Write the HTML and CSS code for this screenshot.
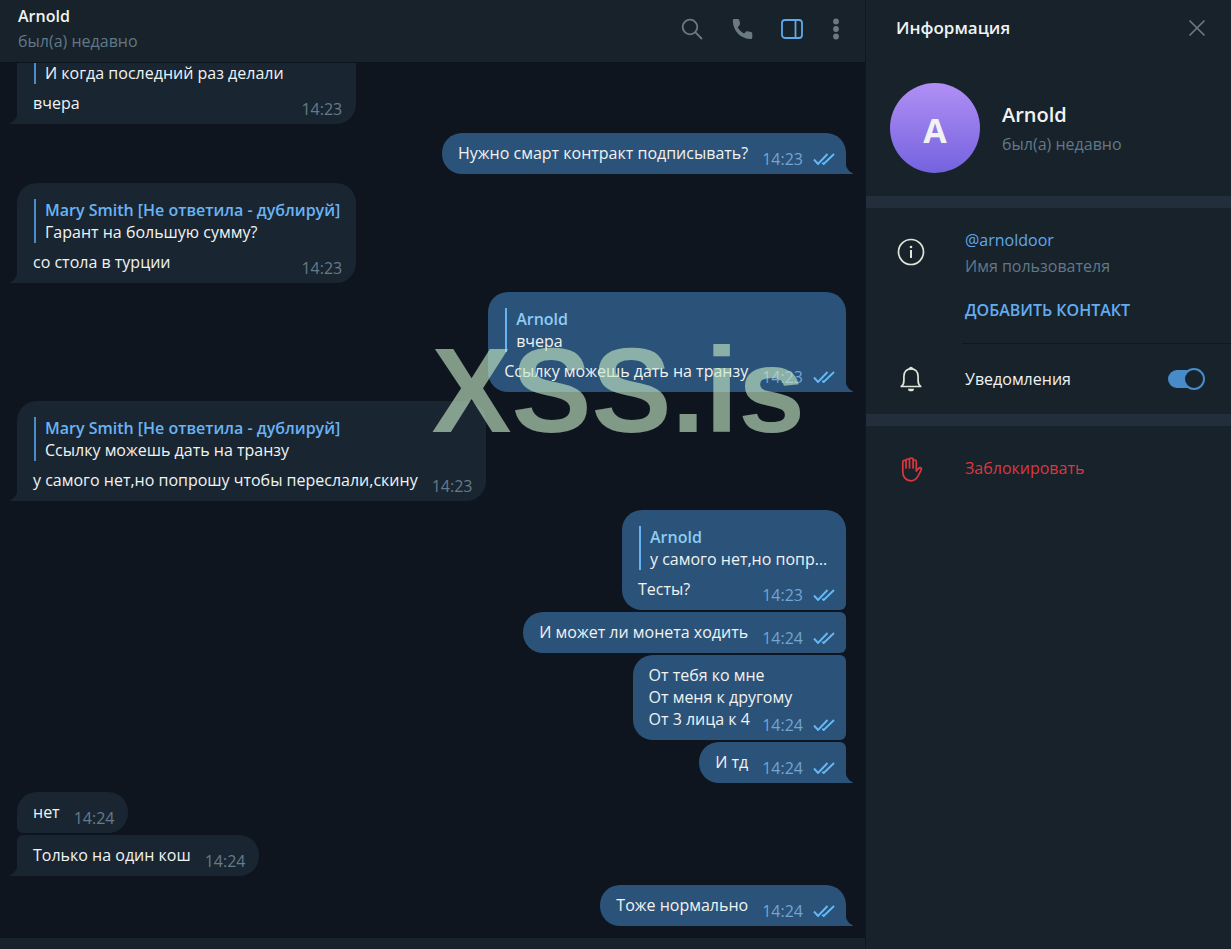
FILE: index.html
```
<!DOCTYPE html>
<html lang="ru">
<head>
  <meta charset="utf-8">
  <title>Arnold</title>
  <link rel="stylesheet" href="styles.css">
</head>
<body>
  <svg class="sprite" aria-hidden="true">
    <symbol id="checks" viewBox="0 0 22 12">
      <path d="M1 6.500 5 11 14.500 1M9.300 9.700 10.700 11 21 1" />
    </symbol>
  </svg>

  <main class="chat">
    <header class="chat-header">
      <div class="chat-title">
        <h1 class="name">Arnold</h1>
        <div class="status">был(а) недавно</div>
      </div>
      <div class="actions">
        <button class="icon-button" aria-label="Поиск">
          <svg width="24" height="24" viewBox="0 0 24 24" fill="none" stroke="currentColor" stroke-width="1.8"><circle cx="10" cy="10" r="7.3"/><path d="M15.2 15.2 22 22"/></svg>
        </button>
        <button class="icon-button" aria-label="Позвонить">
          <svg width="24" height="24" viewBox="0 0 24 24" fill="currentColor"><path d="M4.3 2h3.2c1.200 0 1.700.6 1.900 1.600l.6 3c.1.800-.1 1.400-.7 1.900L7.700 10.200c1.500 2.700 3.500 4.700 6.300 6.200l1.900-1.700c.6-.5 1.200-.6 1.900-.5l3 .7c1 .2 1.500.8 1.500 1.800v3.500c0 1-.6 1.800-1.600 1.800C11 22 2.800 14 2.800 3.500 2.800 2.600 3.400 2 4.300 2z"/></svg>
        </button>
        <button class="icon-button active" aria-label="Информация">
          <svg width="24" height="24" viewBox="0 0 24 24" fill="none" stroke="currentColor" stroke-width="1.8"><rect x="2" y="3" width="20" height="18" rx="3"/><path d="M15.500 3v18"/></svg>
        </button>
        <button class="icon-button narrow" aria-label="Меню">
          <svg width="12" height="24" viewBox="0 0 12 24" fill="currentColor"><circle cx="6" cy="4.500" r="2.900"/><circle cx="6" cy="12" r="2.900"/><circle cx="6" cy="19.500" r="2.900"/></svg>
        </button>
      </div>
    </header>

    <section class="messages">
      <article class="message in tail">
        <blockquote class="quote"><b>Mary Smith [Не ответила - дублируй]</b><span>И когда последний раз делали</span></blockquote>
        <div class="row"><p>вчера</p><span class="meta"><time>14:23</time></span></div>
      </article>
      <article class="message out tail">
        <div class="row"><p>Нужно смарт контракт подписывать?</p><span class="meta"><time>14:23</time><svg class="checks"><use href="#checks"/></svg></span></div>
      </article>
      <article class="message in tail">
        <blockquote class="quote"><b>Mary Smith [Не ответила - дублируй]</b><span>Гарант на большую сумму?</span></blockquote>
        <div class="row"><p>со стола в турции</p><span class="meta"><time>14:23</time></span></div>
      </article>
      <article class="message out tail">
        <blockquote class="quote"><b>Arnold</b><span>вчера</span></blockquote>
        <div class="row"><p>Ссылку можешь дать на транзу</p><span class="meta"><time>14:23</time><svg class="checks"><use href="#checks"/></svg></span></div>
      </article>
      <article class="message in tail">
        <blockquote class="quote"><b>Mary Smith [Не ответила - дублируй]</b><span>Ссылку можешь дать на транзу</span></blockquote>
        <div class="row"><p>у самого нет,но попрошу чтобы переслали,скину</p><span class="meta"><time>14:23</time></span></div>
      </article>
      <article class="message out">
        <blockquote class="quote short"><b>Arnold</b><span>у самого нет,но попрошу чтобы переслали,скину</span></blockquote>
        <div class="row"><p>Тесты?</p><span class="meta"><time>14:23</time><svg class="checks"><use href="#checks"/></svg></span></div>
      </article>
      <article class="message out joined">
        <div class="row"><p>И может ли монета ходить</p><span class="meta"><time>14:24</time><svg class="checks"><use href="#checks"/></svg></span></div>
      </article>
      <article class="message out joined">
        <div class="row"><p>От тебя ко мне<br>От меня к другому<br>От 3 лица к 4</p><span class="meta over"><time>14:24</time><svg class="checks"><use href="#checks"/></svg></span></div>
      </article>
      <article class="message out joined tail">
        <div class="row"><p>И тд</p><span class="meta"><time>14:24</time><svg class="checks"><use href="#checks"/></svg></span></div>
      </article>
      <article class="message in">
        <div class="row"><p>нет</p><span class="meta"><time>14:24</time></span></div>
      </article>
      <article class="message in joined tail">
        <div class="row"><p>Только на один кош</p><span class="meta"><time>14:24</time></span></div>
      </article>
      <article class="message out tail">
        <div class="row"><p>Тоже нормально</p><span class="meta"><time>14:24</time><svg class="checks"><use href="#checks"/></svg></span></div>
      </article>
    </section>

    <footer class="composer"></footer>
    <div class="watermark">XSS.is</div>
  </main>

  <aside class="info">
    <header class="info-header">
      <h2 class="info-title">Информация</h2>
      <button class="icon-button" aria-label="Закрыть">
        <svg width="24" height="24" viewBox="0 0 24 24" fill="none" stroke="currentColor" stroke-width="1.700"><path d="M4.500 4.500l15 15M19.500 4.500l-15 15"/></svg>
      </button>
    </header>
    <div class="profile">
      <div class="avatar">A</div>
      <div class="profile-text">
        <div class="profile-name">Arnold</div>
        <div class="status">был(а) недавно</div>
      </div>
    </div>

    <section class="block contact">
      <svg class="block-icon" width="28" height="28" viewBox="0 0 28 28" fill="none" stroke="currentColor" stroke-width="1.700"><circle cx="14" cy="14" r="12.500"/><path d="M14 12v8" stroke-width="2"/><circle cx="14" cy="9" r="1.300" fill="currentColor" stroke="none"/></svg>
      <div class="contact-text">
        <a class="username" href="#arnoldoor">@arnoldoor</a>
        <div class="status">Имя пользователя</div>
        <button class="add">ДОБАВИТЬ КОНТАКТ</button>
      </div>
    </section>
    <section class="notifications">
      <svg class="block-icon" width="28" height="28" viewBox="0 0 28 28" fill="none" stroke="currentColor" stroke-width="1.700" stroke-linejoin="round"><path d="M4.300 21.500c2-1.500 2.600-3.200 2.600-6v-4.300c0-4.300 2.800-7.400 7.100-7.400s7.100 3.100 7.100 7.400v4.300c0 2.800.6 4.500 2.600 6z"/><path d="M12.600 3.600a1.500 1.500 0 0 1 2.800 0z" fill="currentColor"/><path d="M11 23.700h6a3 2.600 0 0 1-6 0z" fill="currentColor" stroke="none"/></svg>
      <label class="notify-label" for="notify">Уведомления</label>
      <input class="toggle" id="notify" type="checkbox" checked>
    </section>

    <section class="block">
      <button class="ban">
        <svg class="block-icon" width="28" height="28" viewBox="0 0 28 28" fill="none" stroke="currentColor" stroke-width="1.700" stroke-linejoin="round" stroke-linecap="round"><path d="M9 14V7.500c-.5-1.800-3.200-1.500-3.200.5V18c0 5.500 3.500 8.800 8.200 8.800 3.500 0 5.300-1.600 7-4.600l3.300-6.500c.7-1.700-1.400-2.700-2.600-1.400L19.300 17V7.500c0-2-3-2-3.100 0M9 7.500v-1c0-2 3.500-2 3.500 0V14M12.500 6.500v-1c0-2 3.600-2 3.600 0V14"/></svg>
        <span>Заблокировать</span>
      </button>
    </section>
  </aside>
</body>
</html>
```
FILE: styles.css
```
*, ::before, ::after {
  box-sizing: border-box;
}

body {
  margin: 0;
  display: flex;
  height: 100vh;
  overflow: hidden;
  font-family: "Open Sans", "Noto Sans", sans-serif;
  font-size: 16px;
  line-height: 22px;
  color: #f0f3f2;
  background-color: #0e151f;
}

h1, h2, p, blockquote {
  margin: 0;
}

button {
  padding: 0;
  border: none;
  background: none;
  color: inherit;
  font: inherit;
  cursor: pointer;
}

.sprite {
  position: absolute;
  width: 0;
  height: 0;
}

.name {
  font-size: 16px;
  font-weight: 600;
}

.status {
  color: #617887;
}

/* chat column */

.chat {
  position: relative;
  flex: 1;
  min-width: 0;
  display: flex;
  flex-direction: column;
}

.chat-header {
  display: flex;
  justify-content: space-between;
  padding: 5px 23px 10px 18px;
  background-color: #18222b;
  border-bottom: 1px solid #0c131b;
}

.chat-title {
  display: grid;
  gap: 3px;
}

.actions {
  display: flex;
  align-items: center;
  gap: 26px;
}

.icon-button {
  display: flex;
  color: #6b7a80;
}

.icon-button.active {
  color: #5ea9ea;
}

.messages {
  flex: 1;
  min-height: 0;
  overflow: hidden;
  display: flex;
  flex-direction: column;
  justify-content: flex-end;
  padding: 0 19px 11px 17px;
}

.message {
  position: relative;
  flex-shrink: 0;
  margin-top: 9px;
  padding: 9px 14px 10px 16px;
  border-radius: 20px;
}

.message.joined {
  margin-top: 2px;
}

.in {
  align-self: flex-start;
  background-color: #192632;
  border-bottom-left-radius: 6px;
}

.in.joined {
  border-top-left-radius: 6px;
}

.out {
  align-self: flex-end;
  padding-right: 11px;
  background-color: #2b5279;
  border-bottom-right-radius: 6px;
}

.out.joined {
  border-top-right-radius: 6px;
}

.in.tail {
  border-bottom-left-radius: 0;
}

.out.tail {
  border-bottom-right-radius: 0;
}

.tail::after {
  content: "";
  position: absolute;
  bottom: 0;
  width: 7px;
  height: 12px;
}

.in.tail::after {
  right: 100%;
  background: radial-gradient(circle at -5px 0, transparent 12px, #192632 13px);
}

.out.tail::after {
  left: 100%;
  background: radial-gradient(circle at 12px 0, transparent 12px, #2b5279 13px);
}

.quote {
  display: grid;
  margin: 7px 2px 8px 1px;
  padding-left: 9px;
  border-left: 2px solid #4a8bc9;
}

.quote b {
  font-weight: 600;
  color: #6ab3f3;
}

.quote span {
  overflow: hidden;
  text-overflow: ellipsis;
  white-space: nowrap;
}

.quote.short {
  max-width: 191px;
}

.out .quote {
  margin-right: 5px;
  border-color: #65b3f5;
}

.out .quote b {
  color: #8fcbf2;
}

.row {
  display: flex;
  justify-content: space-between;
  align-items: flex-end;
  gap: 14px;
}

.meta {
  display: flex;
  align-items: center;
  gap: 10px;
  margin-bottom: -6px;
  color: #667a89;
}

/* the time slides under the longer lines of a multi-line message */
.meta.over {
  margin-left: -44px;
}

.out .meta {
  color: #71a5d3;
}

.checks {
  width: 22px;
  height: 12px;
  fill: none;
  stroke: #65b9f4;
  stroke-width: 1.9;
}

.composer {
  height: 12px;
  background-color: #18222b;
  border-top: 1px solid #0c131b;
}

.watermark {
  position: absolute;
  top: 330px;
  right: 60px;
  font-family: "Liberation Sans", Arial, sans-serif;
  font-size: 120px;
  font-weight: bold;
  line-height: 120px;
  color: rgba(196, 232, 196, 0.63);
  pointer-events: none;
}

/* info column */

.info {
  width: 366px;
  background-color: #18222b;
  border-left: 1px solid #0f171f;
}

.info-header {
  display: flex;
  justify-content: space-between;
  align-items: center;
  height: 56px;
  padding: 0 22px 0 30px;
}

.info-title {
  font-size: 17px;
  font-weight: 600;
}

.profile {
  display: flex;
  align-items: center;
  gap: 22px;
  padding: 27px 24px 23px;
}

.avatar {
  display: flex;
  justify-content: center;
  align-items: center;
  width: 90px;
  height: 90px;
  padding-top: 4px;
  border-radius: 50%;
  background: linear-gradient(#b18ff5, #7462de);
  font-size: 34px;
  font-weight: 700;
}

.profile-text {
  padding-top: 2px;
}

.profile-name {
  margin-bottom: 7px;
  font-size: 20px;
  font-weight: 600;
}

.block {
  border-top: 12px solid #222e3b;
}

.block-icon {
  flex-shrink: 0;
  color: #dfe6d9;
}

.contact {
  display: flex;
  gap: 37px;
  padding-left: 31px;
}

.contact .block-icon {
  margin-top: 30px;
}

.contact-text {
  flex: 1;
  padding: 21px 0 22px 3px;
  border-bottom: 1px solid #0f171f;
}

.username {
  display: block;
  margin-bottom: 4px;
  color: #5fa8ea;
  text-decoration: none;
}

.add {
  margin-top: 22px;
  font-weight: 600;
  color: #64acf0;
}

.notifications {
  display: flex;
  align-items: center;
  height: 70px;
  padding: 0 26px 0 31px;
}

.notify-label {
  flex: 1;
  margin-left: 40px;
}

.toggle {
  appearance: none;
  position: relative;
  width: 37px;
  height: 22px;
  margin: 0;
  cursor: pointer;
}

.toggle::before {
  content: "";
  position: absolute;
  inset: 2px 4px 2px 0;
  border-radius: 9px;
  background-color: #478bc9;
}

.toggle::after {
  content: "";
  position: absolute;
  top: 0;
  right: 0;
  width: 22px;
  height: 22px;
  border: 2px solid #478bc9;
  border-radius: 50%;
  background-color: #18222b;
}

.ban {
  display: flex;
  align-items: center;
  gap: 40px;
  width: 100%;
  padding: 28px 31px;
  color: #dc373e;
}

.ban .block-icon {
  color: inherit;
}
```
